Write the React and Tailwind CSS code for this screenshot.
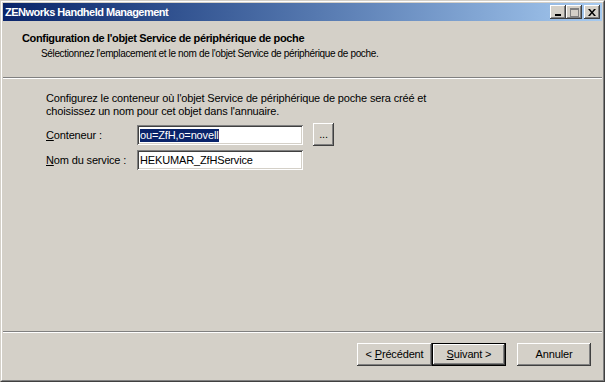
import React from 'react';

const raised =
  'shadow-[inset_-1px_-1px_#404040,inset_1px_1px_#ffffff,inset_-2px_-2px_#808080,inset_2px_2px_#d4d0c8]';
const sunken =
  'shadow-[inset_1px_1px_#808080,inset_-1px_-1px_#ffffff,inset_2px_2px_#404040,inset_-2px_-2px_#d4d0c8]';

function CaptionButton({ children, className = '' }) {
  return (
    <div className={`w-[16px] h-[14px] bg-[#d4d0c8] flex items-center justify-center ${raised} ${className}`}>
      {children}
    </div>
  );
}

function Button({ children, isDefault = false, className = '' }) {
  if (isDefault) {
    return (
      <div className={`h-[23px] border border-black bg-[#d4d0c8] ${className}`}>
        <div className={`w-full h-full flex items-center justify-center ${raised}`}>
          <span>{children}</span>
        </div>
      </div>
    );
  }
  return (
    <div className={`h-[23px] bg-[#d4d0c8] flex items-center justify-center ${raised} ${className}`}>
      <span>{children}</span>
    </div>
  );
}

export default function App() {
  return (
    <div
      className="w-[605px] h-[382px] bg-[#d4d0c8] text-[11px] text-black leading-[13px] tracking-[-0.15px]"
      style={{ fontFamily: '"Liberation Sans", Arial, sans-serif' }}
    >
      <div className="w-full h-full border border-t-[#d4d0c8] border-l-[#d4d0c8] border-b-[#404040] border-r-[#404040]">
        <div className="w-full h-full border border-t-white border-l-white border-b-[#808080] border-r-[#808080] p-px flex flex-col">
          {/* title bar */}
          <div className="h-[18px] shrink-0 bg-gradient-to-r from-[#0a246a] to-[#a6caf0] flex items-center pl-[2px] pr-[2px]">
            <span className="text-white font-bold text-[11px] tracking-[-0.5px] flex-1">ZENworks Handheld Management</span>
            <CaptionButton>
              <svg width="8" height="7" viewBox="0 0 8 7">
                <rect x="1" y="5" width="6" height="2" fill="#000" />
              </svg>
            </CaptionButton>
            <CaptionButton>
              <svg width="9" height="9" viewBox="0 0 9 9">
                <rect x="0.5" y="0.5" width="8" height="8" fill="none" stroke="#808080" />
                <rect x="0" y="0" width="9" height="2" fill="#808080" />
              </svg>
            </CaptionButton>
            <CaptionButton className="ml-[2px]">
              <svg width="8" height="7" viewBox="0 0 8 7">
                <path d="M0 0h2l2 2.5L6 0h2L5 3.5 8 7H6L4 4.5 2 7H0l3-3.5z" fill="#000" />
              </svg>
            </CaptionButton>
          </div>

          {/* header */}
          <div className="h-[56px] shrink-0 pl-[19px] pt-[10px]">
            <div className="font-bold text-[11px] leading-[14px] tracking-[-0.35px]">
              Configuration de l'objet Service de périphérique de poche
            </div>
            <div className="pl-[19px] pt-[2px] text-[10px] tracking-[-0.35px]">
              Sélectionnez l'emplacement et le nom de l'objet Service de périphérique de poche.
            </div>
          </div>
          <div className="h-px bg-[#808080] shrink-0" />
          <div className="h-px bg-white shrink-0" />

          {/* body */}
          <div className="flex-1 pl-[43px] pt-[13px]">
            <div>Configurez le conteneur où l'objet Service de périphérique de poche sera créé et</div>
            <div>choisissez un nom pour cet objet dans l'annuaire.</div>
            <div className="flex items-center mt-[7px] h-[20px]">
              <span className="w-[91px]"><span className="underline">C</span>onteneur :</span>
              <div className={`w-[166px] h-[20px] bg-white flex items-center pl-[3px] ${sunken}`}>
                <span className="bg-[#0a246a] text-white pr-px">ou=ZfH,o=novell</span>
              </div>
              <Button className="w-[21px] ml-[10px] h-[21px] -mt-[2px]">...</Button>
            </div>
            <div className="flex items-center mt-[5px] h-[20px]">
              <span className="w-[91px]"><span className="underline">N</span>om du service :</span>
              <div className={`w-[166px] h-[20px] bg-white flex items-center pl-[3px] ${sunken}`}>
                <span>HEKUMAR_ZfHService</span>
              </div>
            </div>
          </div>

          <div className="h-px bg-[#808080] shrink-0" />
          <div className="h-px bg-white shrink-0" />

          {/* footer */}
          <div className="h-[46px] shrink-0 flex items-start pt-[10px] pl-[354px]">
            <Button className="w-[75px]">&lt; <span className="underline">P</span>récédent</Button>
            <Button isDefault className="w-[74px]"><span className="underline">S</span>uivant &gt;</Button>
            <Button className="w-[74px] ml-[11px]">Annuler</Button>
          </div>
        </div>
      </div>
    </div>
  );
}
